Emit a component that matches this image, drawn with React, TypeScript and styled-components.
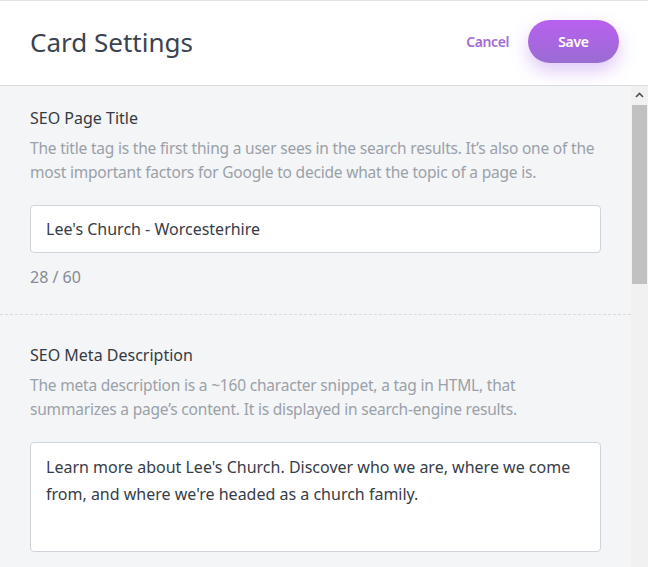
import styled, { createGlobalStyle } from 'styled-components'

const GlobalStyle = createGlobalStyle`
  html, body {
    margin: 0;
    padding: 0;
    height: 100%;
    overflow: hidden;
  }
  body {
    font-family: 'Noto Sans', 'Open Sans', sans-serif;
    background: #ffffff;
  }
  #root {
    height: 100%;
  }
`

interface FieldProps {
  label: string
  description: string
  value: string
  multiline?: boolean
  counter?: string
  narrow?: boolean
}

const Field = (props: FieldProps) => (
  <Section>
    <Label>{props.label}</Label>
    <Description $narrow={props.narrow}>{props.description}</Description>
    {props.multiline ? (
      <TextArea defaultValue={props.value} />
    ) : (
      <Input defaultValue={props.value} />
    )}
    {props.counter && <Counter>{props.counter}</Counter>}
  </Section>
)

export default function App() {
  return (
    <>
      <GlobalStyle />
      <Page>
        <Header>
          <Title>Card Settings</Title>
          <Actions>
            <CancelButton>Cancel</CancelButton>
            <SaveButton>Save</SaveButton>
          </Actions>
        </Header>
        <Body>
          <Content>
            <Field
              label="SEO Page Title"
              description="The title tag is the first thing a user sees in the search results. It’s also one of the most important factors for Google to decide what the topic of a page is."
              value="Lee's Church - Worcesterhire"
              counter="28 / 60"
            />
            <Field
              label="SEO Meta Description"
              description="The meta description is a ~160 character snippet, a tag in HTML, that summarizes a page’s content. It is displayed in search-engine results."
              value="Learn more about Lee's Church. Discover who we are, where we come from, and where we're headed as a church family."
              multiline
              narrow
            />
          </Content>
          <ScrollBar>
            <ScrollArrow>
              <svg width="9" height="6" viewBox="0 0 9 6">
                <path d="M1 5 L4.5 1.5 L8 5" fill="none" stroke="#505050" strokeWidth="1.6" />
              </svg>
            </ScrollArrow>
            <Track>
              <Thumb />
            </Track>
          </ScrollBar>
        </Body>
      </Page>
    </>
  )
}

const Page = styled.div`
  display: flex;
  flex-direction: column;
  height: 100%;
  border-top: 1px solid #e3e4e6;
  box-sizing: border-box;
`

const Header = styled.header`
  display: flex;
  align-items: center;
  justify-content: space-between;
  height: 85px;
  box-sizing: border-box;
  padding: 0 29px 3px 30px;
  border-bottom: 1px solid #d9dbde;
  background: #ffffff;
  flex-shrink: 0;
`

const Title = styled.h1`
  margin: 0;
  font-size: 26px;
  font-weight: 400;
  color: #3b4350;
`

const Actions = styled.div`
  display: flex;
  align-items: center;
  gap: 19px;
`

const CancelButton = styled.button`
  border: none;
  background: none;
  padding: 0;
  font-family: inherit;
  font-size: 14px;
  font-weight: 600;
  letter-spacing: -0.4px;
  color: #a56bd5;
  cursor: pointer;
`

const SaveButton = styled.button`
  width: 91px;
  height: 43px;
  border: none;
  border-radius: 22px;
  background: linear-gradient(180deg, #b960f0 0%, #9a6cd2 100%);
  box-shadow: 0 8px 18px rgba(164, 98, 232, 0.35);
  font-family: inherit;
  font-size: 14px;
  font-weight: 600;
  letter-spacing: -0.3px;
  color: #ffffff;
  cursor: pointer;
`

const Body = styled.div`
  flex: 1;
  display: flex;
  min-height: 0;
  background: #f4f5f7;
`

const Content = styled.div`
  flex: 1;
  overflow: hidden;
`

const Section = styled.section`
  display: flex;
  flex-direction: column;
  padding: 28px 30px 26px 30px;
  border-bottom: 1px dashed #d8dcdf;

  &:first-child {
    padding-top: 20px;
  }

  &:last-child {
    border-bottom: none;
  }
`

const Label = styled.div`
  font-size: 16px;
  line-height: 24px;
  color: #343b44;
`

const Description = styled.p<{ $narrow?: boolean }>`
  margin: 7px 0 0 0;
  max-width: ${(p) => (p.$narrow ? '500px' : 'none')};
  font-size: 15.5px;
  line-height: 23.5px;
  letter-spacing: -0.2px;
  color: #9aa1a9;
`

const fieldBase = `
  box-sizing: border-box;
  width: 100%;
  margin-top: 21px;
  border: 1px solid #cfd5db;
  border-radius: 4px;
  background: #ffffff;
  font-family: 'Noto Sans', 'Open Sans', sans-serif;
  font-size: 16px;
  color: #363d46;
  outline: none;
`

const Input = styled.input`
  ${fieldBase}
  height: 48px;
  padding: 0 15px;
`

const TextArea = styled.textarea`
  ${fieldBase}
  height: 110px;
  padding: 11px 15px;
  line-height: 27px;
  resize: none;
`

const Counter = styled.div`
  margin-top: 13px;
  font-size: 16px;
  line-height: 22px;
  color: #858b93;
`

const ScrollBar = styled.div`
  width: 17px;
  display: flex;
  flex-direction: column;
  background: #f1f1f1;
  flex-shrink: 0;
`

const ScrollArrow = styled.div`
  height: 17px;
  display: flex;
  align-items: center;
  justify-content: center;
`

const Track = styled.div`
  flex: 1;
  padding-top: 2px;
`

const Thumb = styled.div`
  height: 179px;
  margin: 0 1px;
  background: #c1c1c1;
`
